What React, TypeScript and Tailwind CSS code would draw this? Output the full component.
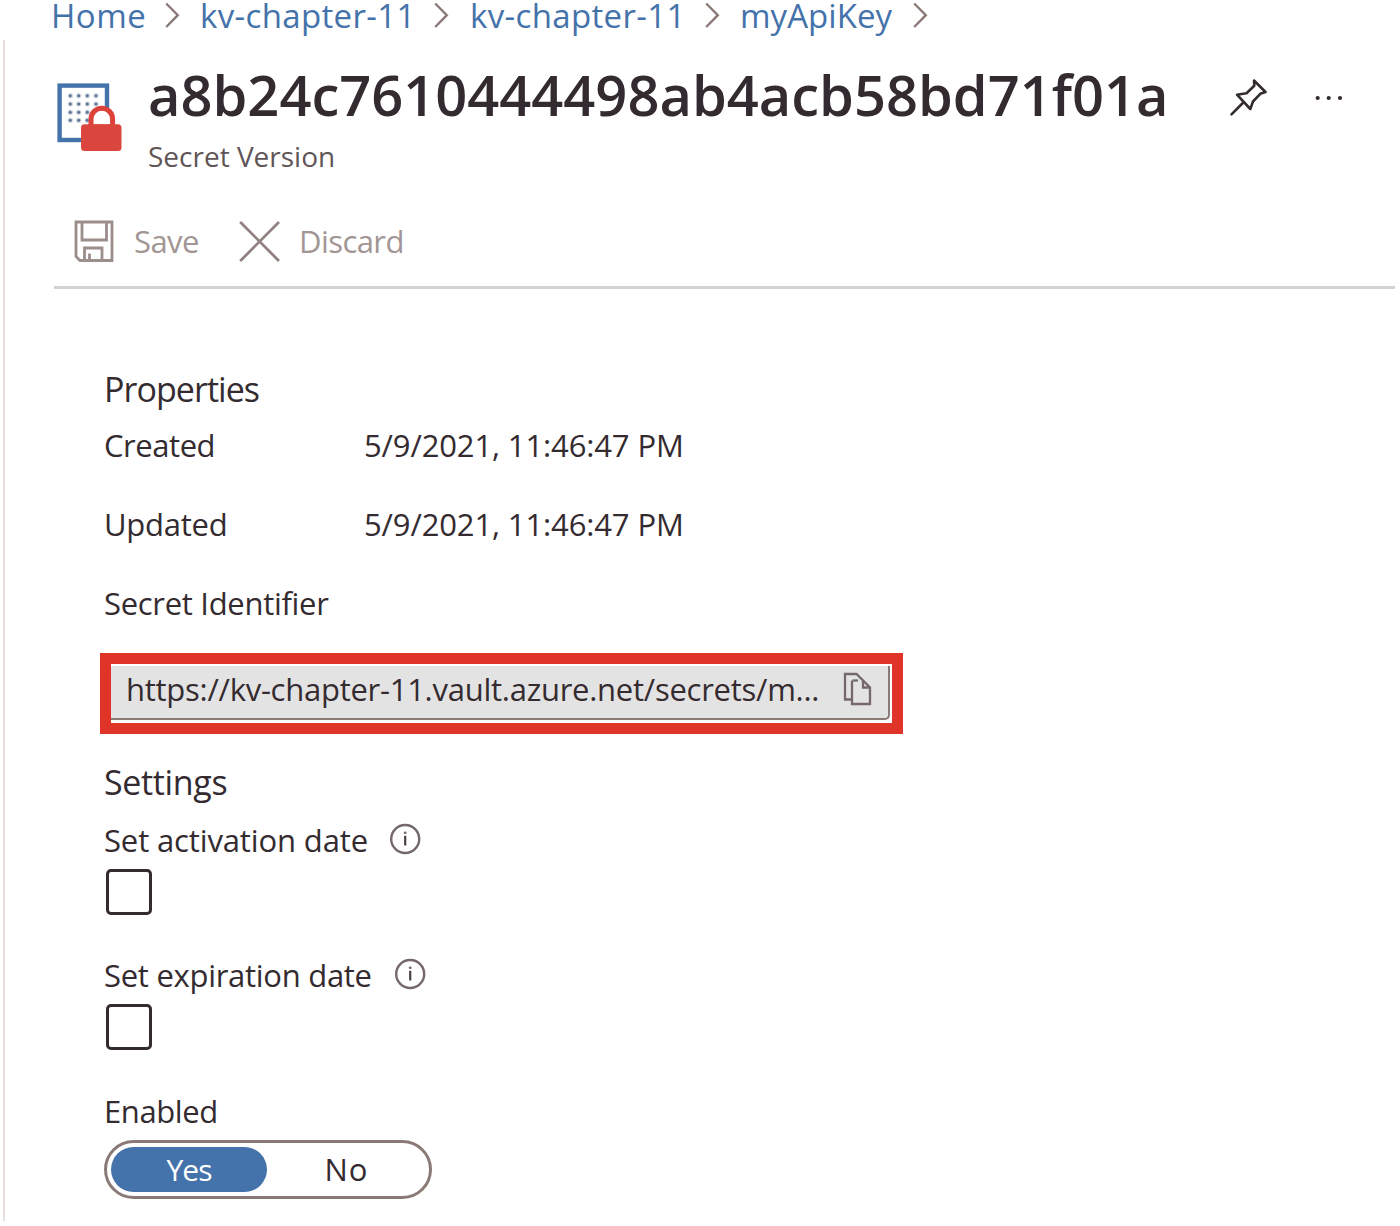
import type { ReactNode } from "react";

function Chevron() {
  return (
    <svg className="h-[28px] w-[15px] shrink-0" viewBox="0 0 15 28" fill="none" stroke="#8a7a76" strokeWidth="2.4">
      <path d="M1.2 3.5 12.8 15.2 1.2 27" />
    </svg>
  );
}

function SecretIcon() {
  const xs = [13.3, 21.7, 30.3, 39];
  const ys = [12.7, 21, 29.3, 37.3];
  return (
    <svg className="h-[70px] w-[68px] shrink-0" viewBox="0 0 68 70" fill="none">
      <rect x="2.6" y="2.6" width="47.4" height="54.4" stroke="#4472aa" strokeWidth="4.4" fill="#fff" />
      {ys.map((y) => xs.map((x) => (
        <g key={`${x}-${y}`}>
          <circle cx={x} cy={y} r="2.8" fill="#d5dbe3" />
          <circle cx={x} cy={y} r="1.5" fill="#5b7195" />
        </g>
      )))}
      <path d="M34 44V36a10.8 10.8 0 0 1 21.6 0v8z" fill="#fff" stroke="#dc4239" strokeWidth="5" />
      <rect x="24" y="41.3" width="40.5" height="26.7" rx="3.5" fill="#da463d" />
    </svg>
  );
}

function PinIcon() {
  return (
    <svg className="h-[42px] w-[42px]" viewBox="0 0 42 42" fill="none" stroke="#342b30" strokeWidth="2.6" strokeLinejoin="round" strokeLinecap="round">
      <path d="M9 18.7 18.5 17.2 26.3 9.8 26 4.5 37.5 16 32.3 17.8 25 25.5 22.3 33zM3.5 38.3 15.3 26.5" />
    </svg>
  );
}

function MoreIcon() {
  return (
    <svg className="h-[6px] w-[30px]" viewBox="0 0 30 6" fill="#342b30">
      <circle cx="3.7" cy="3" r="2.1" />
      <circle cx="14.7" cy="3" r="2.1" />
      <circle cx="26" cy="3" r="2.1" />
    </svg>
  );
}

function SaveIcon() {
  return (
    <svg className="h-[42px] w-[40px]" viewBox="0 0 40 42" fill="none" stroke="#9b8e8b" strokeWidth="2.8">
      <path d="M2 2H38V40.5H6L2 36.5zM8 2V20H32.5V2M10.5 40.5V28H28V40.5M15.5 33.5V40.5" />
    </svg>
  );
}

function DiscardIcon() {
  return (
    <svg className="h-[42px] w-[42px]" viewBox="0 0 42 42" fill="none" stroke="#8f8280" strokeWidth="2.8">
      <path d="M1.2 2 40 41M40 2 1.2 41" />
    </svg>
  );
}

function CopyIcon() {
  return (
    <svg className="h-[34px] w-[29px]" viewBox="0 0 29 34" fill="none" stroke="#75686a" strokeWidth="2.3">
      <path d="M8 27.5H2V2H13.5L27 15.5V32H9V8.5" />
      <path d="M9.5 8.5H15" />
      <path d="M20 8.5V15.5H27" />
    </svg>
  );
}

function InfoIcon() {
  return (
    <svg className="h-[32px] w-[32px]" viewBox="0 0 32 32" fill="none">
      <circle cx="16.2" cy="16" r="14" stroke="#75686a" strokeWidth="2.4" />
      <circle cx="16.2" cy="9.8" r="1.4" fill="#75686a" />
      <path d="M16.2 12.8V22.5" stroke="#4a4044" strokeWidth="2.2" />
    </svg>
  );
}

function Checkbox() {
  return <div className="ml-[2px] h-[46px] w-[46px] rounded-[5px] border-[3px] border-[#342b30]" />;
}

function Row({ label, children, labelClass = "" }: { label: string; children?: ReactNode; labelClass?: string }) {
  return (
    <div className="flex h-10 leading-[42px]">
      <span className={`w-[260px] ${labelClass}`}>{label}</span>
      {children}
    </div>
  );
}

export default function App() {
  return (
    <div className="flex h-[1226px] w-[1400px] overflow-hidden bg-white pl-[3px] font-['Open_Sans','Noto_Sans',sans-serif] text-[31px] whitespace-nowrap text-[#342b30]">
      <div className="mt-10 h-[1181px] w-[2px] shrink-0 bg-[#e6dfdb]" />
      <main className="flex-1">
        <nav className="ml-[46px] flex h-[31px] text-[33px] leading-[31px] text-[#4472aa]">
          <span className="w-[114px] tracking-[0.5px]">Home</span>
          <Chevron />
          <span className="ml-5 w-[234px] tracking-[0.35px]">kv-chapter-11</span>
          <Chevron />
          <span className="ml-[21px] w-[235px] tracking-[0.35px]">kv-chapter-11</span>
          <Chevron />
          <span className="ml-5 w-[173px] tracking-[0.05px]">myApiKey</span>
          <Chevron />
        </nav>

        <header className="mt-[32px] ml-[52px] flex">
          <div className="mt-5">
            <SecretIcon />
          </div>
          <div className="ml-[23px] w-[1080px]">
            <h1 className="h-[60px] text-[56px] leading-[62px] font-semibold">a8b24c7610444498ab4acb58bd71f01a</h1>
            <p className="mt-[14px] h-9 text-[28px] leading-[38px] text-[#5f5556]">Secret Version</p>
          </div>
          <div className="mt-[13px]">
            <PinIcon />
          </div>
          <div className="mt-[32px] ml-11">
            <MoreIcon />
          </div>
        </header>

        <div className="mt-[47px] ml-[49px] flex h-[69px] w-[1341px] border-b-[3px] border-[#d5d1cf] pl-5 leading-[43px] text-[#a29694]">
          <SaveIcon />
          <span className="ml-5 w-[105px] tracking-[-0.57px]">Save</span>
          <DiscardIcon />
          <span className="ml-[18px] tracking-[-0.57px]">Discard</span>
        </div>

        <section className="ml-[98px] pt-[80px]">
          <h2 className="ml-px h-10 text-[34px] leading-[41px] tracking-[-0.95px]">Properties</h2>
          <div className="mt-[15px] ml-px flex flex-col gap-[39px]">
            <Row label="Created" labelClass="tracking-[-0.45px]">
              <span className="tracking-[-0.13px]">5/9/2021, 11:46:47 PM</span>
            </Row>
            <Row label="Updated" labelClass="tracking-[-0.25px]">
              <span className="tracking-[-0.13px]">5/9/2021, 11:46:47 PM</span>
            </Row>
            <Row label="Secret Identifier" labelClass="tracking-[-0.3px]" />
          </div>

          <div className="mt-[31px] -ml-[3px] h-[81px] w-[803px] border-[11px] border-[#e03429] bg-white pt-[2px] pr-[2px] pb-[3px]">
            <div className="flex h-[54px] w-[779px] rounded-br-[5px] border-r-2 border-b-2 border-[#8a7a76] bg-[#e4e3e3] pl-[15px]">
              <span className="w-[716px] leading-[47px] tracking-[-0.26px]">https://kv-chapter-11.vault.azure.net/secrets/m...</span>
              <div className="mt-[6px] ml-px">
                <CopyIcon />
              </div>
            </div>
          </div>

          <h2 className="mt-[28px] ml-px h-10 text-[34px] leading-10 tracking-[-0.35px]">Settings</h2>
          <div className="mt-[17px] ml-px flex h-10 items-center leading-[42px]">
            <span className="w-[285px] pt-px tracking-[-0.13px]">Set activation date</span>
            <InfoIcon />
          </div>
          <div className="mt-[10px] ml-px">
            <Checkbox />
          </div>
          <div className="mt-[39px] ml-px flex h-10 items-center leading-[42px]">
            <span className="w-[290px] pt-px tracking-[-0.28px]">Set expiration date</span>
            <InfoIcon />
          </div>
          <div className="mt-[10px] ml-px">
            <Checkbox />
          </div>
          <p className="mt-10 ml-px h-10 leading-[42px] tracking-[-0.4px]">Enabled</p>
          <div className="mt-[10px] ml-px flex h-[59px] w-[328px] rounded-full border-[3px] border-[#8a7a76] p-[4px] text-center leading-[45px]">
            <span className="h-[45px] w-[156px] shrink-0 rounded-full bg-[#4472aa] text-[30px] tracking-[-1px] text-white">Yes</span>
            <span className="w-[162px] pl-[1px] tracking-[1px]">No</span>
          </div>
        </section>
      </main>
    </div>
  );
}
